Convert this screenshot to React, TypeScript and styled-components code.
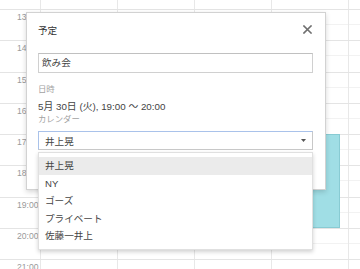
import React from "react";
import styled, { createGlobalStyle } from "styled-components";

const Global = createGlobalStyle`
  html, body { margin: 0; padding: 0; width: 360px; height: 269px; overflow: hidden; background: #fff; }
  body { font-family: "Liberation Sans", "Noto Sans CJK JP", sans-serif; }
  * { box-sizing: border-box; }
`;

const Calendar = styled.div`
  position: relative;
  width: 360px;
  height: 269px;
  overflow: hidden;
  display: flex;
  flex-direction: column;
`;

const Row = styled.div<{ $h: number; $top?: boolean }>`
  flex: 0 0 ${(p) => p.$h}px;
  height: ${(p) => p.$h}px;
  display: grid;
  grid-template-columns: 40px repeat(4, 77px) 1fr;
  border-top: ${(p) => (p.$top ? "1px solid #e4e4e4" : "none")};
`;

const TimeCell = styled.div`
  padding: 2px 0 0 17px;
  font-size: 8.6px;
  line-height: 10px;
  color: #9a9a9a;
  white-space: nowrap;
  overflow: hidden;
`;

const DayCell = styled.div<{ $half?: boolean }>`
  border-left: 1px solid #e8e8e8;
  background: ${(p) =>
    p.$half
      ? "linear-gradient(to bottom, transparent calc(50% - 1px), #f2f2f2 calc(50% - 1px), #f2f2f2 50%, transparent 50%)"
      : "none"};
`;

const Event = styled.div`
  position: absolute;
  left: 272px;
  top: 134px;
  width: 68px;
  height: 94px;
  background: #a0dee5;
  border: 1px solid #88cbd3;
`;

const Dialog = styled.div`
  position: absolute;
  left: 26px;
  top: 12px;
  width: 300px;
  height: 178px;
  background: #fff;
  border: 1px solid #d2d2d2;
  box-shadow: 0 2px 5px rgba(0, 0, 0, 0.16);
  padding: 11px 12px 0 11px;
  display: flex;
  flex-direction: column;
`;

const Header = styled.div`
  display: flex;
  justify-content: space-between;
  align-items: flex-start;
  height: 14px;
`;

const Title = styled.div`
  font-size: 9.6px;
  line-height: 14px;
  color: #333;
`;

const Close = styled.svg`
  margin-top: 1px;
  margin-right: 1px;
`;

const TextInput = styled.div`
  margin-top: 15px;
  height: 20px;
  border: 1px solid #d0d0d0;
  border-top-color: #c0c0c0;
  padding-left: 3px;
  font-size: 9.6px;
  line-height: 18px;
  color: #444;
`;

const Label = styled.div<{ $mt: number }>`
  margin-top: ${(p) => p.$mt}px;
  font-size: 8.4px;
  line-height: 12px;
  color: #a2a2a2;
`;

const DateText = styled.div`
  margin-top: 5px;
  font-size: 9.8px;
  line-height: 13px;
  color: #444;
  white-space: nowrap;
`;

const SelectWrap = styled.div`
  position: relative;
  margin-top: 6px;
`;

const Select = styled.div`
  height: 19px;
  border: 1px solid #c8c8c8;
  border-top-color: #a9c2ea;
  border-left-color: #a9c2ea;
  padding: 0 6px 0 6px;
  display: flex;
  align-items: center;
  justify-content: space-between;
  font-size: 9.6px;
  color: #444;
`;

const Menu = styled.div`
  position: absolute;
  left: 0;
  right: 0;
  top: calc(100% + 2px);
  background: #fff;
  border: 1px solid rgba(0, 0, 0, 0.12);
  box-shadow: 0 2px 4px rgba(0, 0, 0, 0.18);
  padding: 4px 0 4px;
  z-index: 2;
`;

const Item = styled.div<{ $active?: boolean }>`
  height: 17.5px;
  line-height: 17.5px;
  padding-left: 6px;
  font-size: 9.6px;
  color: #444;
  background: ${(p) => (p.$active ? "#ebebeb" : "transparent")};
`;

const hours = ["13", "14", "15", "16", "17", "18", "19:00", "20:00", "21:00"];
const calendars = ["井上晃", "NY", "ゴーズ", "プライベート", "佐藤一井上"];

export default function App() {
  return (
    <>
      <Global />
      <Calendar>
        <Row $h={9}>
          <TimeCell />
          {[0, 1, 2, 3, 4].map((i) => (
            <DayCell key={i} />
          ))}
        </Row>
        {hours.map((h) => (
          <Row key={h} $h={31.25} $top>
            <TimeCell>{h}</TimeCell>
            {[0, 1, 2, 3, 4].map((i) => (
              <DayCell key={i} $half />
            ))}
          </Row>
        ))}
        <Event />
        <Dialog>
          <Header>
            <Title>予定</Title>
            <Close width="9" height="9" viewBox="0 0 9 9">
              <path d="M1 1 L8 8 M8 1 L1 8" stroke="#707070" strokeWidth="1.6" strokeLinecap="square" />
            </Close>
          </Header>
          <TextInput>飲み会</TextInput>
          <Label $mt={10}>日時</Label>
          <DateText>5月 30日 (火), 19:00 ～ 20:00</DateText>
          <Label $mt={0}>カレンダー</Label>
          <SelectWrap>
            <Select>
              <span>井上晃</span>
              <svg width="5" height="3" viewBox="0 0 5 3">
                <polygon points="0,0 5,0 2.5,3" fill="#555" />
              </svg>
            </Select>
            <Menu>
              {calendars.map((c, i) => (
                <Item key={c} $active={i === 0}>
                  {c}
                </Item>
              ))}
            </Menu>
          </SelectWrap>
        </Dialog>
      </Calendar>
    </>
  );
}
